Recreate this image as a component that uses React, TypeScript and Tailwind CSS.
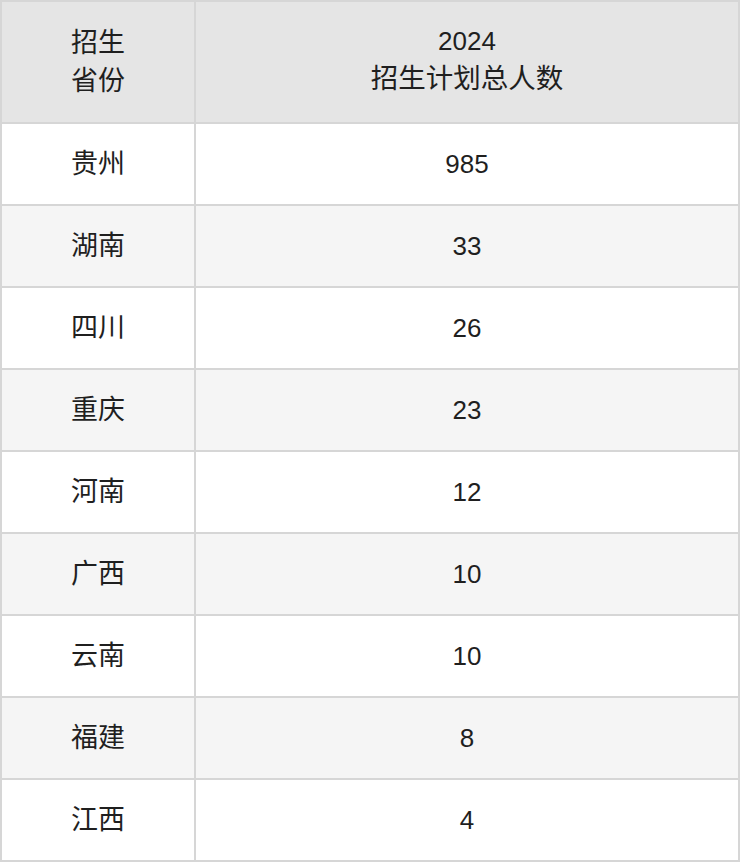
const rows: [string, string][] = [
  ["贵州", "985"],
  ["湖南", "33"],
  ["四川", "26"],
  ["重庆", "23"],
  ["河南", "12"],
  ["广西", "10"],
  ["云南", "10"],
  ["福建", "8"],
  ["江西", "4"],
];

const font = {
  fontFamily: '"Liberation Sans", "Noto Sans CJK SC", sans-serif',
};

export default function App() {
  return (
    <div className="w-[740px] bg-white" style={font}>
      <div className="grid grid-cols-[192px_1fr] gap-[2px] bg-[#d6d6d6] p-[2px] leading-[38px] text-[#1f1f1f]">
        <div className="flex h-[120px] flex-col items-center justify-center bg-[#e5e5e5] text-[27px]">
          <span>招生</span>
          <span>省份</span>
        </div>
        <div className="flex h-[120px] flex-col items-center justify-center bg-[#e5e5e5] pb-[4px]">
          <span className="text-[26px]">2024</span>
          <span className="text-[27.5px]">招生计划总人数</span>
        </div>
        {rows.map(([prov, num], i) => {
          const bg = i % 2 === 1 ? "bg-[#f5f5f5]" : "bg-white";
          return [
            <div key={prov + "a"} className={`flex h-[80px] items-center justify-center text-[27px] ${bg}`}>
              {prov}
            </div>,
            <div key={prov + "b"} className={`flex h-[80px] items-center justify-center text-[26px] ${bg}`}>
              {num}
            </div>,
          ];
        })}
      </div>
    </div>
  );
}
